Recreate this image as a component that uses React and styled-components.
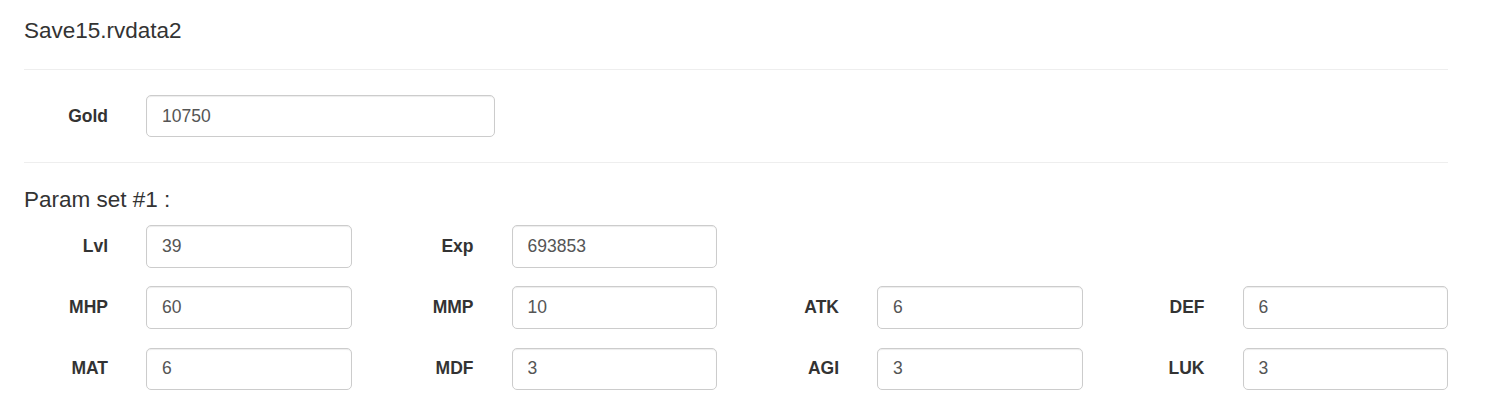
import React from "react";
import styled, { createGlobalStyle } from "styled-components";

const Global = createGlobalStyle`
  html, body { margin: 0; padding: 0; background: #fff; }
  body {
    font-family: "Liberation Sans", Arial, Helvetica, sans-serif;
    font-size: 17.5px;
    line-height: 1.42857;
    color: #333;
  }
  * { box-sizing: border-box; }
`;

const Page = styled.div`
  width: 1424px;
  padding: 19px 0 0 0;
  margin-left: 24px;
`;

const Heading = styled.h4`
  margin: 0;
  font-size: 22.5px;
  line-height: 24.75px;
  font-weight: 500;
  color: #333;
`;

const SectionHeading = styled(Heading)`
  margin-bottom: 12px;
`;

const Divider = styled.hr`
  margin: 25px 0;
  border: 0;
  border-top: 1px solid #eee;
  height: 0;
`;

const Field = styled.div`
  display: grid;
  grid-template-columns: 84px ${(p) => p.$inputWidth || "1fr"};
  column-gap: 38px;
  align-items: center;
`;

const Label = styled.label`
  text-align: right;
  font-weight: 700;
  font-size: 17.5px;
  line-height: 25px;
  color: #333;
`;

const Input = styled.input`
  display: block;
  width: 100%;
  height: 42.5px;
  padding: 7.5px 15px;
  font-family: inherit;
  font-size: 17.5px;
  line-height: 25px;
  color: #555;
  background: #fff;
  border: 1px solid #ccc;
  border-radius: 5px;
  box-shadow: inset 0 1px 1px rgba(0, 0, 0, 0.075);
  outline: none;
`;

const StatGrid = styled.div`
  display: grid;
  grid-template-columns: repeat(4, 1fr);
  column-gap: 38px;
  row-gap: 18.75px;
`;

const stats = [
  ["Lvl", "39"],
  ["Exp", "693853"],
  null,
  null,
  ["MHP", "60"],
  ["MMP", "10"],
  ["ATK", "6"],
  ["DEF", "6"],
  ["MAT", "6"],
  ["MDF", "3"],
  ["AGI", "3"],
  ["LUK", "3"],
];

export default function App() {
  return (
    <>
      <Global />
      <Page>
        <Heading>Save15.rvdata2</Heading>
        <Divider />
        <Field $inputWidth="349px">
          <Label>Gold</Label>
          <Input defaultValue="10750" />
        </Field>
        <Divider />
        <SectionHeading>Param set #1 :</SectionHeading>
        <StatGrid>
          {stats.map((s, i) =>
            s ? (
              <Field key={i}>
                <Label>{s[0]}</Label>
                <Input defaultValue={s[1]} />
              </Field>
            ) : (
              <div key={i} />
            )
          )}
        </StatGrid>
      </Page>
    </>
  );
}
